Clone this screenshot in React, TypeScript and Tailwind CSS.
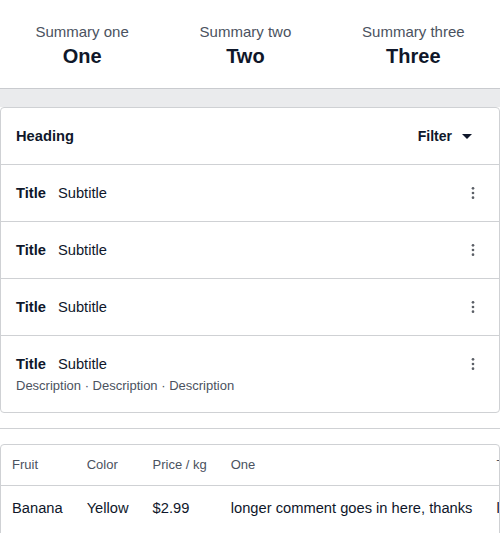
import React from 'react';

const summaries = [
    { label: 'Summary one', value: 'One' },
    { label: 'Summary two', value: 'Two' },
    { label: 'Summary three', value: 'Three' },
];

const rows = [
    { title: 'Title', subtitle: 'Subtitle' },
    { title: 'Title', subtitle: 'Subtitle' },
    { title: 'Title', subtitle: 'Subtitle' },
    { title: 'Title', subtitle: 'Subtitle', description: 'Description · Description · Description' },
];

const KebabIcon = () => (
    <svg width="16" height="16" viewBox="0 0 24 24" fill="#5b5f66">
        <circle cx="12" cy="5" r="2" />
        <circle cx="12" cy="12" r="2" />
        <circle cx="12" cy="19" r="2" />
    </svg>
);

const CaretIcon = () => (
    <svg width="24" height="24" viewBox="0 0 24 24" fill="#0f172a">
        <path d="M7 10l5 5 5-5z" />
    </svg>
);

const App: React.FC = () => {
    return (
        <div className="w-[500px] bg-white text-[#0f172a]" style={{ fontFamily: '"Liberation Sans", Arial, sans-serif' }}>
            <div className="flex justify-around py-5 border-b border-[#c9cbcf]">
                {summaries.map(s => (
                    <div key={s.label} className="flex flex-col items-center">
                        <p className="text-[15px] leading-6 text-[#4b5260]">{s.label}</p>
                        <p className="text-xl leading-6 font-bold">{s.value}</p>
                    </div>
                ))}
            </div>

            <div className="bg-[#eaebed] h-[18px]"></div>

            <div className="border border-[#cfd1d4] rounded-[4px] bg-white">
                <div className="flex items-center justify-between pl-[15px] pr-[20px] py-4 border-b border-[#cfd1d4]">
                    <h2 className="text-[14.7px] leading-6 font-bold">Heading</h2>
                    <button className="flex items-center gap-[3px] text-sm font-bold">
                        Filter
                        <CaretIcon />
                    </button>
                </div>
                <ul>
                    {rows.map((row, i) => (
                        <li key={i} className={`flex items-start justify-between pl-[15px] pr-4 py-4 ${i < rows.length - 1 ? 'border-b border-[#cfd1d4]' : ''}`}>
                            <div>
                                <p className="text-[14.7px] leading-6">
                                    <span className="font-bold">{row.title}</span>
                                    <span className="ml-3">{row.subtitle}</span>
                                </p>
                                {row.description && <p className="text-[13px] leading-5 text-[#4b5260]">{row.description}</p>}
                            </div>
                            <span className="mt-1 mr-[2px]"><KebabIcon /></span>
                        </li>
                    ))}
                </ul>
            </div>

            <div className="mt-[15px] border-t border-[#cfd1d4] pt-[15px]">
                <div className="border border-[#cfd1d4] rounded-[4px] overflow-hidden">
                    <table className="border-collapse whitespace-nowrap">
                        <thead>
                            <tr className="border-b border-[#cfd1d4]">
                                {['Fruit', 'Color', 'Price / kg', 'One', 'Two'].map((h, i) => (
                                    <th key={h} className={`${i === 0 ? 'pl-[11px]' : 'pl-3'} pr-3 py-[10px] text-left text-[13px] leading-5 font-normal text-[#4b5260]`}>{h}</th>
                                ))}
                            </tr>
                        </thead>
                        <tbody>
                            <tr>
                                {['Banana', 'Yellow', '$2.99', 'longer comment goes in here, thanks', 'longer comment goes in here'].map((c, i) => (
                                    <td key={i} className={`${i === 0 ? 'pl-[11px]' : 'pl-3'} pr-3 pt-[10px] pb-4 text-[14.7px] leading-6`}>{c}</td>
                                ))}
                            </tr>
                        </tbody>
                    </table>
                </div>
            </div>
        </div>
    );
};

export default App;
